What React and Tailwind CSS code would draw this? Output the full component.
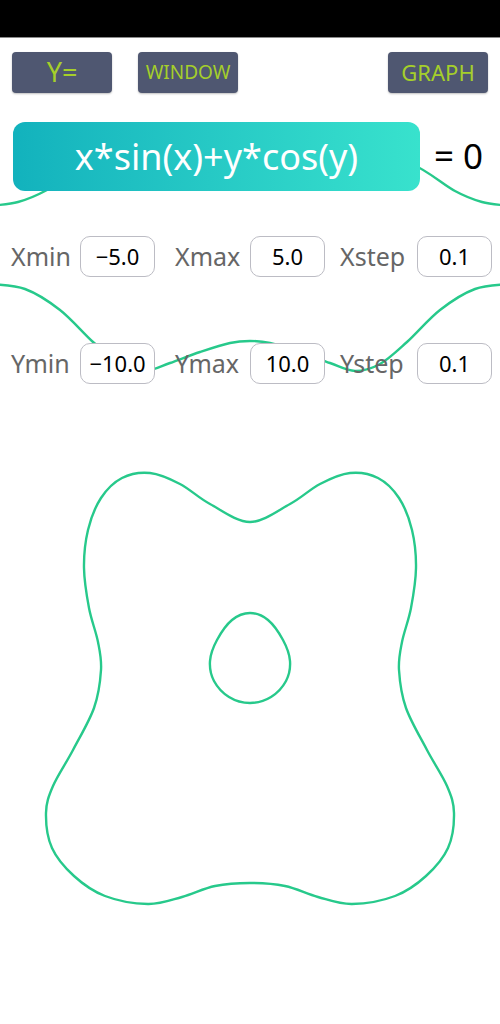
import React from 'react';

const FONT = { fontFamily: '"Noto Sans", "Open Sans", sans-serif' };

// smooth closed/open path through points (catmull-rom -> bezier)
function smoothPath(pts, closed) {
  const n = pts.length;
  const get = (i) => {
    if (closed) return pts[(i + n) % n];
    return pts[Math.max(0, Math.min(n - 1, i))];
  };
  let d = `M${pts[0][0]},${pts[0][1]}`;
  const last = closed ? n : n - 1;
  for (let i = 0; i < last; i++) {
    const p0 = get(i - 1), p1 = get(i), p2 = get(i + 1), p3 = get(i + 2);
    const c1 = [p1[0] + (p2[0] - p0[0]) / 6, p1[1] + (p2[1] - p0[1]) / 6];
    const c2 = [p2[0] - (p3[0] - p1[0]) / 6, p2[1] - (p3[1] - p1[1]) / 6];
    d += ` C${c1[0].toFixed(1)},${c1[1].toFixed(1)} ${c2[0].toFixed(1)},${c2[1].toFixed(1)} ${p2[0]},${p2[1]}`;
  }
  return closed ? d + ' Z' : d;
}

const mirror = (half) => {
  const left = half.slice(1, -1).reverse().map(([x, y]) => [500 - x, y]);
  return [...half, ...left];
};

const outer = mirror([
  [250, 522], [290, 504], [320, 484], [350, 473], [378, 478], [399, 498], [412, 530], [416, 568],
  [411, 608], [402, 642], [399, 670], [406, 708], [427, 750], [447, 786], [454, 813], [448, 848],
  [426, 876], [395, 896], [352, 904], [318, 897], [285, 886], [250, 883],
]);

const egg = mirror([
  [250, 613], [268, 620], [283, 640], [290, 661], [286, 681], [271, 697], [250, 703],
]);

const waveTop = [
  [-10, 206], [18, 202], [45, 191], [90, 163], [160, 140], [250, 132], [340, 140], [410, 163],
  [455, 191], [482, 202], [510, 206],
];

const waveMid = [
  [-10, 284], [25, 289], [60, 310], [93, 342], [120, 364], [145, 371], [170, 363], [200, 352],
  [230, 343], [250, 341], [270, 343], [300, 352], [330, 363], [355, 371], [380, 364], [407, 342],
  [440, 310], [475, 289], [510, 284],
];

function Graph() {
  return (
    <svg className="absolute inset-0" width="500" height="1024" viewBox="0 0 500 1024">
      <g fill="none" stroke="#27c98b" strokeWidth="2.4" strokeLinejoin="round">
        <path d={smoothPath(outer, true)} />
        <path d={smoothPath(egg, true)} />
        <path d={smoothPath(waveTop, false)} />
        <path d={smoothPath(waveMid, false)} />
      </g>
    </svg>
  );
}

function TopButton({ children, className = '' }) {
  return (
    <button className={`w-[100px] h-[41px] rounded-[4px] bg-[#4f5771] text-[#a5cf2a] flex items-center justify-center shadow-[0_1px_2px_rgba(0,0,0,0.25)] ${className}`}>
      {children}
    </button>
  );
}

function Field({ label, value, labelClass = '' }) {
  return (
    <div className="flex items-center">
      <span className={`text-[25px] text-[#666666] leading-none ${labelClass}`}>{label}</span>
      <div className="w-[75px] h-[41px] rounded-[10px] border border-[#bcbcc4] bg-white flex items-center justify-center text-[22px] text-black">
        {value}
      </div>
    </div>
  );
}

export default function App() {
  return (
    <div className="relative w-[500px] h-[1024px] bg-white overflow-hidden" style={FONT}>
      <Graph />
      <div className="relative">
        <div className="h-[38px] bg-black border-b border-[#8a8a8a]" />

        <div className="flex items-center px-[12px] mt-[14px]">
          <TopButton className="text-[27px]">Y=</TopButton>
          <TopButton className="ml-[26px] text-[19px]">WINDOW</TopButton>
          <TopButton className="ml-auto text-[22px]">GRAPH</TopButton>
        </div>

        <div className="flex items-center mt-[29px] pl-[13px]">
          <div className="w-[407px] h-[69px] rounded-[12px] bg-gradient-to-r from-[#12b2bd] to-[#38e2cd] flex items-center justify-center text-white text-[36px]">
            x*sin(x)+y*cos(y)
          </div>
          <span className="ml-[14px] text-[35px] text-black">= 0</span>
        </div>

        <div className="flex items-center mt-[45px] pl-[11px]">
          <Field label="Xmin" value="−5.0" labelClass="w-[69px]" />
          <div className="ml-[20px]"><Field label="Xmax" value="5.0" labelClass="w-[75px]" /></div>
          <div className="ml-[15px]"><Field label="Xstep" value="0.1" labelClass="w-[77px]" /></div>
        </div>

        <div className="flex items-center mt-[66px] pl-[11px]">
          <Field label="Ymin" value="−10.0" labelClass="w-[69px]" />
          <div className="ml-[20px]"><Field label="Ymax" value="10.0" labelClass="w-[75px]" /></div>
          <div className="ml-[15px]"><Field label="Ystep" value="0.1" labelClass="w-[77px]" /></div>
        </div>
      </div>
    </div>
  );
}
